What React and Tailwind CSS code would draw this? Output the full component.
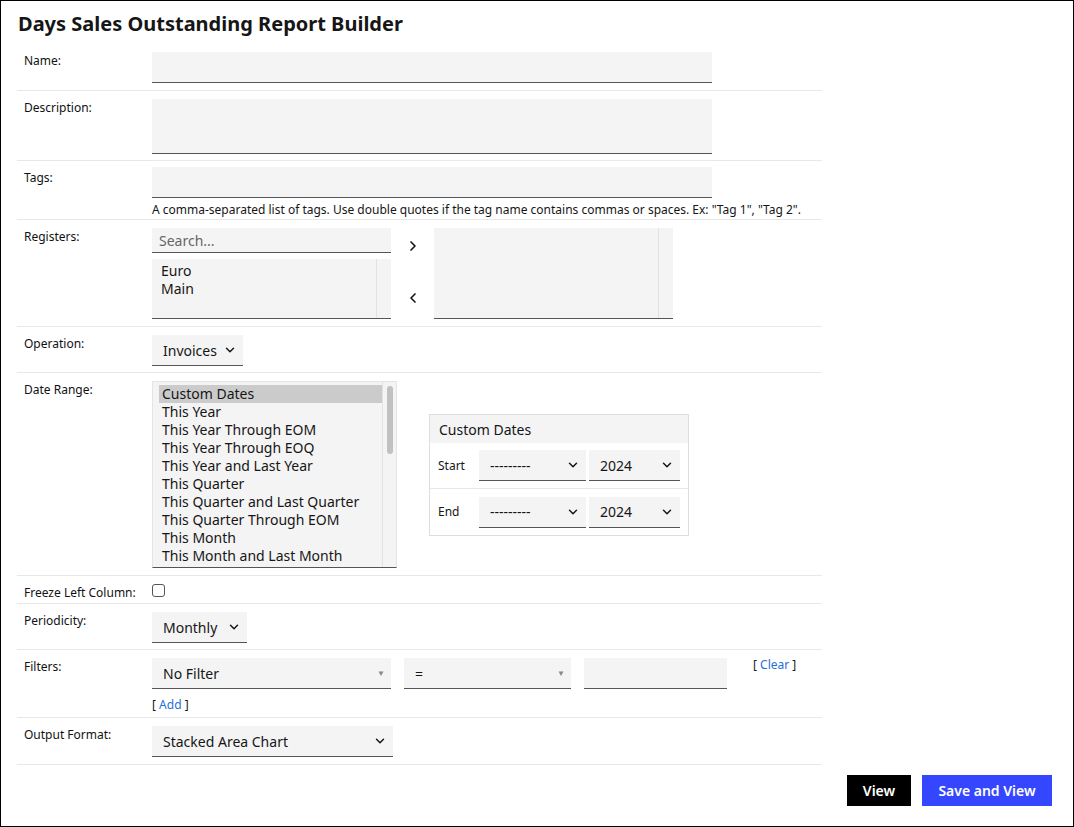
import { ChevronDown, ChevronRight, ChevronLeft } from "lucide-react";

const RANGES = [
  "Custom Dates",
  "This Year",
  "This Year Through EOM",
  "This Year Through EOQ",
  "This Year and Last Year",
  "This Quarter",
  "This Quarter and Last Quarter",
  "This Quarter Through EOM",
  "This Month",
  "This Month and Last Month",
];

function Row({ label, h, children }) {
  return (
    <div className={`flex border-b border-[#e8e8e8] ${h}`}>
      <div className="w-[135px] shrink-0 pl-[7px] pt-[8px] text-[12px] text-[#111]">{label}</div>
      <div className="flex-1 pt-[8px]">{children}</div>
    </div>
  );
}

function Sel({ w, children, small }) {
  return (
    <div className={`flex h-[31px] items-center justify-between border-b border-[#555] bg-[#f4f4f4] pl-[11px] pr-[6px] text-[14px] ${w}`}>
      <span>{children}</span>
      {small ? (
        <span className="text-[8px] text-[#888]">▼</span>
      ) : (
        <ChevronDown size={14} strokeWidth={2.5} />
      )}
    </div>
  );
}

export default function App() {
  return (
    <div className="h-[827px] w-[1074px] border border-black bg-white font-['Inter',sans-serif] text-[#161616]">
      <h1 className="pl-[17px] pt-[11px] text-[20px] font-bold leading-[24px]">Days Sales Outstanding Report Builder</h1>
      <div className="ml-[16px] mt-[8px] w-[805px]">
        <Row label="Name:" h="h-[47px]">
          <div className="h-[31px] w-[560px] border-b border-[#555] bg-[#f4f4f4]" />
        </Row>
        <Row label="Description:" h="h-[70px]">
          <div className="h-[55px] w-[560px] border-b border-[#555] bg-[#f4f4f4]" />
        </Row>
        <Row label="Tags:" h="h-[59px]">
          <div className="-mt-[2px] h-[31px] w-[560px] border-b border-[#555] bg-[#f4f4f4]" />
          <div className="mt-[3px] whitespace-nowrap text-[12px]">
            A comma-separated list of tags. Use double quotes if the tag name contains commas or spaces. Ex: "Tag 1", "Tag 2".
          </div>
        </Row>
        <Row label="Registers:" h="h-[107px]">
          <div className="flex">
            <div className="w-[239px]">
              <div className="flex h-[25px] items-center border-b border-[#555] bg-[#f4f4f4] pl-[7px] text-[14px] text-[#666]">Search...</div>
              <div className="mt-[6px] flex h-[60px] border-b border-[#555] bg-[#f4f4f4]">
                <div className="flex-1 pl-[9px] pt-[3px] text-[14px] leading-[18px]">
                  <div>Euro</div>
                  <div>Main</div>
                </div>
                <div className="w-[15px] border-l border-[#e2e2e2]" />
              </div>
            </div>
            <div className="flex w-[43px] flex-col items-center pt-[10px]">
              <ChevronRight size={16} strokeWidth={2.5} />
              <div className="h-[36px]" />
              <ChevronLeft size={16} strokeWidth={2.5} />
            </div>
            <div className="flex h-[91px] w-[239px] border-b border-[#555] bg-[#f4f4f4]">
              <div className="flex-1" />
              <div className="w-[15px] border-l border-[#e2e2e2]" />
            </div>
          </div>
        </Row>
        <Row label="Operation:" h="h-[46px]">
          <Sel w="w-[91px]">Invoices</Sel>
        </Row>
        <Row label="Date Range:" h="h-[203px]">
          <div className="flex">
            <div className="flex h-[187px] w-[245px] border border-b-[#555] border-[#e4e4e4] bg-[#f4f4f4]">
              <div className="flex-1 pl-[6px] pt-[3px] text-[14px] leading-[18px]">
                {RANGES.map((r, i) => (
                  <div key={r} className={`pl-[3px] ${i === 0 ? "bg-[#cbcbcb]" : ""}`}>{r}</div>
                ))}
              </div>
              <div className="w-[14px] border-l border-[#e2e2e2] pt-[4px]">
                <div className="mx-auto h-[68px] w-[6px] rounded bg-[#c1c1c1]" />
              </div>
            </div>
            <div className="ml-[32px] mt-[33px] h-[122px] w-[260px] border border-[#ddd]">
              <div className="flex h-[28px] items-center bg-[#f4f4f4] pl-[9px] text-[14px]">Custom Dates</div>
              {["Start", "End"].map((s, i) => (
                <div key={s} className={`flex h-[46px] items-center ${i === 0 ? "border-b border-[#e8e8e8]" : ""}`}>
                  <div className="w-[49px] pl-[8px] text-[12px]">{s}</div>
                  <Sel w="w-[107px]">---------</Sel>
                  <div className="w-[3px]" />
                  <Sel w="w-[91px]">2024</Sel>
                </div>
              ))}
            </div>
          </div>
        </Row>
        <Row label="Freeze Left Column:" h="h-[28px]">
          <div className="h-[13px] w-[13px] rounded-[3px] border border-[#555]" />
        </Row>
        <Row label="Periodicity:" h="h-[46px]">
          <Sel w="w-[95px]">Monthly</Sel>
        </Row>
        <Row label="Filters:" h="h-[68px]">
          <div className="flex">
            <Sel w="w-[239px]" small>No Filter</Sel>
            <div className="w-[13px]" />
            <Sel w="w-[167px]" small>=</Sel>
            <div className="w-[13px]" />
            <div className="h-[31px] w-[143px] border-b border-[#555] bg-[#f4f4f4]" />
            <div className="ml-[26px] -mt-[2px] text-[12px]">[ <span className="text-[#1f6fd8]">Clear</span> ]</div>
          </div>
          <div className="mt-[7px] text-[12px]">[ <span className="text-[#1f6fd8]">Add</span> ]</div>
        </Row>
        <Row label="Output Format:" h="h-[47px]">
          <Sel w="w-[241px]">Stacked Area Chart</Sel>
        </Row>
      </div>
      <div className="mr-[21px] mt-[10px] flex justify-end gap-[11px]">
        <div className="flex h-[31px] w-[64px] items-center justify-center bg-black text-[14px] font-semibold text-white">View</div>
        <div className="flex h-[31px] w-[130px] items-center justify-center bg-[#3447ff] text-[14px] font-semibold text-white">Save and View</div>
      </div>
    </div>
  );
}
